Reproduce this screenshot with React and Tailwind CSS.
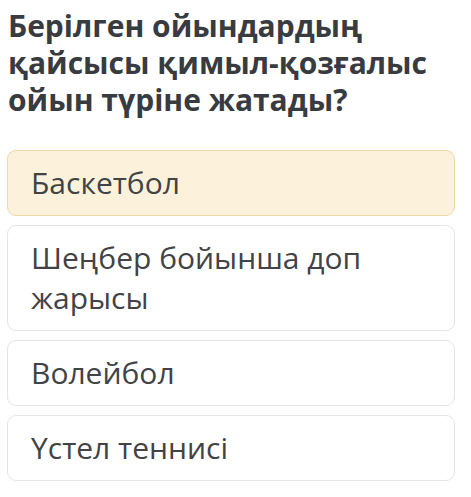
const OPTIONS = [
  { label: 'Баскетбол', selected: true },
  { label: 'Шеңбер бойынша доп жарысы' },
  { label: 'Волейбол' },
  { label: 'Үстел теннисі' },
]

export default function App() {
  return (
    <div className="w-[471px] h-[497px] bg-white font-['Open_Sans',sans-serif] overflow-hidden">
      <h1 className="pl-2 pr-4 pt-[7px] text-[30px] leading-[37px] font-bold text-[#383b40]">
        Берілген ойындардың қайсысы қимыл-қозғалыс ойын түріне жатады?
      </h1>

      <div className="mt-[32px] ml-[7px] w-[448px] flex flex-col gap-[9px]">
        {OPTIONS.map((opt) => (
          <div key={opt.label}
            className={`border rounded-[9px] pl-[23px] pr-6 py-3 text-[30px] leading-[40px] text-[#414345] ${opt.selected ? 'bg-[#fcf2dc] border-[#ecd9a8]' : 'bg-white border-[#e3e5e7]'}`}>
            {opt.label}
          </div>
        ))}
      </div>
    </div>
  )
}
